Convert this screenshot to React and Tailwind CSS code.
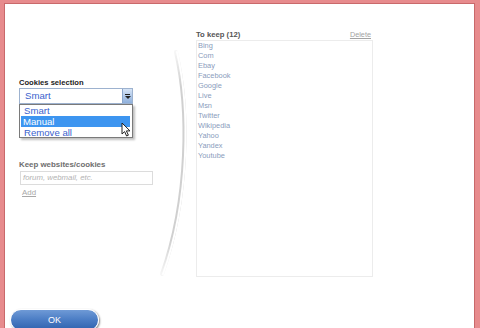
import React from "react";

const sites = ["Bing", "Com", "Ebay", "Facebook", "Google", "Live", "Msn", "Twitter", "Wikipedia", "Yahoo", "Yandex", "Youtube"];

function Divider() {
  return (
    <svg width="40" height="232" viewBox="0 0 40 232" className="mt-[44px] shrink-0">
      <defs>
        <linearGradient id="fade" x1="0" y1="0" x2="0" y2="1">
          <stop offset="0" stopColor="#c4c4c4" stopOpacity="0.15" />
          <stop offset="0.15" stopColor="#c4c4c4" stopOpacity="0.8" />
          <stop offset="0.85" stopColor="#c4c4c4" stopOpacity="0.8" />
          <stop offset="1" stopColor="#c4c4c4" stopOpacity="0.15" />
        </linearGradient>
      </defs>
      <path d="M20 4 C 33 60, 33 150, 6 226" fill="none" stroke="url(#fade)" strokeWidth="4" strokeLinecap="round" />
      <path d="M21 4 C 34 60, 34 150, 7 226" fill="none" stroke="#ffffff" strokeWidth="2" strokeLinecap="round" />
    </svg>
  );
}

function Cursor() {
  return (
    <svg width="11" height="15" viewBox="0 0 11 15" className="absolute left-[116px] top-[118px]">
      <path d="M1 1 L1 12 L3.6 9.6 L5.6 14 L7.4 13.2 L5.4 8.9 L9 8.9 Z" fill="#ffffff" stroke="#222222" strokeWidth="1" strokeLinejoin="round" />
    </svg>
  );
}

export default function App() {
  const font = { fontFamily: '"Liberation Sans", Arial, sans-serif' };
  return (
    <div className="w-[480px] h-[328px] overflow-hidden bg-[#e78b8d] pl-[4px] pt-[3px] pr-[5px]" style={font}>
      <div className="relative h-[330px] bg-white border-l border-t border-r border-[#c9696b] flex flex-col">
        <div className="flex h-[280px]">
          {/* left column */}
          <div className="w-[151px] pl-[14px] pt-[74px] shrink-0">
            <div className="text-[7.6px] leading-[10px] font-bold text-[#222]">Cookies selection</div>
            <div className="relative">
              <div className="flex h-[16px] w-[114px] border border-[#9db2cf] bg-white">
                <div className="flex-1 pl-[5px] text-[9.6px] leading-[14px] text-[#3a5fcd]">Smart</div>
                <div className="w-[10px] h-full bg-linear-to-b from-[#d6e4f6] to-[#8fb0dc] border-l border-[#8aa6cc] flex flex-col items-center justify-center gap-[1px]">
                  <div className="w-[5px] h-[1px] bg-[#222]" />
                  <div className="w-0 h-0 border-l-[3px] border-r-[3px] border-t-[3px] border-l-transparent border-r-transparent border-t-[#222]" />
                </div>
              </div>
              {/* open list */}
              <div className="absolute left-0 top-[16px] w-[114px] h-[34px] bg-white border border-[#7a7a7a] shadow-[2px_2px_2px_rgba(0,0,0,0.25)] text-[9.6px] leading-[11px] text-[#3a5fcd]">
                <div className="pl-[4px]">Smart</div>
                <div className="pl-[2px] mx-[1px] bg-[#3d95f0] text-white w-[109px]">Manual</div>
                <div className="pl-[4px]">Remove all</div>
              </div>
            </div>
            <div className="mt-[56px] text-[7.9px] leading-[10px] font-bold text-[#6e6e6e]">Keep websites/cookies</div>
            <div className="mt-[1px] ml-[1px] w-[133px] h-[14px] border border-[#dcdcdc] pl-[2px] text-[7.8px] leading-[12px] italic text-[#b3b3b3]">
              forum, webmail, etc.
            </div>
            <div className="mt-[3px] ml-[3px] text-[7.9px] leading-[10px] text-[#a8a8a8] underline">Add</div>
          </div>

          <Divider />

          {/* right column */}
          <div className="w-[177px] pt-[25px] shrink-0">
            <div className="flex justify-between items-center h-[11px]">
              <span className="text-[7.7px] leading-[10px] font-bold text-[#555]">To keep (12)</span>
              <span className="text-[7.3px] leading-[10px] text-[#a3a3a3] underline mr-[2px]">Delete</span>
            </div>
            <div className="h-[237px] border border-[#ececec] pl-[1px]">
              {sites.map((s) => (
                <div key={s} className="text-[7.4px] leading-[10px] text-[#8a9cbc]">{s}</div>
              ))}
            </div>
          </div>
        </div>

        <button className="mt-[25px] ml-[5px] w-[89px] h-[22px] rounded-full bg-linear-to-b from-[#6f9ad6] via-[#4a7cc4] to-[#2f62ae] border border-white shadow-[1px_1px_2px_rgba(0,0,0,0.45)] text-white text-[9px] leading-[20px] text-center">
          OK
        </button>

        <Cursor />
      </div>
    </div>
  );
}
